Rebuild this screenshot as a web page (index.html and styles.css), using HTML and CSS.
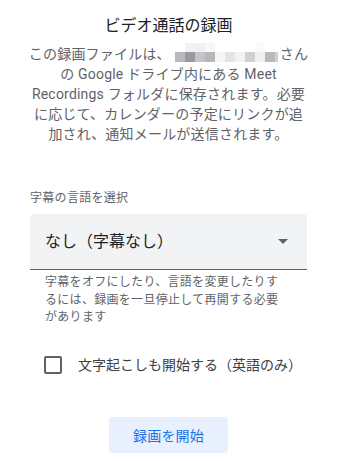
FILE: index.html
```html
<!DOCTYPE html>
<html lang="ja">
<head>
<meta charset="utf-8">
<link rel="stylesheet" href="styles.css">
</head>
<body>
<div class="dialog">
  <h1 class="title">ビデオ通話の録画</h1>
  <p class="desc">この録画ファイルは、<span class="redact" aria-label="名前"><span class="cell"></span><span class="cell g1"></span><span class="cell g2"></span><span class="cell g3"></span><span class="cell"></span><span class="cell"></span><span class="cell"></span><span class="cell"></span><span class="cell g4"></span><span class="cell"></span><span class="cell narrow"></span><span class="cell b1"></span><span class="cell b2"></span><span class="cell b3"></span><span class="cell b4"></span><span class="cell b5"></span><span class="cell b6"></span><span class="cell b7"></span><span class="cell b8"></span><span class="cell b9"></span><span class="cell b10"></span><span class="cell narrow b11"></span></span>さん<br>の Google ドライブ内にある Meet<br>Recordings フォルダに保存されます。必要<br>に応じて、カレンダーの予定にリンクが追<br>加され、通知メールが送信されます。</p>

  <div class="field-label">字幕の言語を選択</div>
  <div class="select">
    <span class="select-value">なし（字幕なし）</span>
    <svg class="arrow" width="10" height="5" viewBox="0 0 10 5"><path d="M0 0h10L5 5z" fill="#5f6368"/></svg>
  </div>
  <p class="helper">字幕をオフにしたり、言語を変更したりするには、録画を一旦停止して再開する必要があります</p>

  <label class="check-row">
    <span class="checkbox"></span>
    <span class="check-label">文字起こしも開始する（英語のみ）</span>
  </label>

  <div class="actions">
    <button class="start-btn">録画を開始</button>
  </div>
</div>
</body>
</html>
```

FILE: styles.css
```css
* { box-sizing: border-box; }
html, body { margin: 0; padding: 0; background: #fff; }
body {
  font-family: "Roboto", "Noto Sans CJK JP", sans-serif;
  width: 337px;
}
.dialog {
  display: flex;
  flex-direction: column;
  padding: 14px 30px 0 30px;
}
.title {
  margin: 0;
  font-weight: 400;
  font-size: 16px;
  line-height: 24px;
  color: #202124;
  text-align: center;
}
.desc {
  margin: 6px -10px 0 -10px;
  font-size: 14px;
  line-height: 20px;
  letter-spacing: 0.2px;
  color: #5f6368;
  text-align: center;
  white-space: nowrap;
}
.redact {
  display: inline-grid;
  grid-template-columns: repeat(10, 10px) 3px;
  grid-template-rows: 9px 10px;
  vertical-align: top;
  margin: -1.5px 2px 0 4px;
}
.cell { background: #fff; }
.g1 { background: #f2f2f2; }
.g2 { background: #f0f0f0; }
.g3 { background: #f7f7f7; }
.g4 { background: #fafafa; }
.b1 { background: #b8b9bc; }
.b2 { background: #9a9b9e; }
.b3 { background: #c4c5c8; }
.b4 { background: #b6b7ba; }
.b5 { background: #f5f5f6; }
.b6 { background: #e3e4e5; }
.b7 { background: #f2f3f3; }
.b8 { background: #cfd0d2; }
.b9 { background: #f0f0f1; }
.b10 { background: #b8b9bb; }
.b11 { background: #d0d0d2; }
.field-label {
  margin-top: 46px;
  font-size: 12px;
  line-height: 16px;
  letter-spacing: 0.3px;
  color: #5f6368;
}
.select {
  margin-top: 8px;
  height: 56px;
  background: #f1f3f4;
  border-radius: 4px 4px 0 0;
  border-bottom: 1px solid #5f6368;
  display: flex;
  align-items: center;
  justify-content: space-between;
  padding: 0 19px 0 15px;
}
.select-value {
  font-size: 16px;
  line-height: 24px;
  color: #202124;
}
.arrow { display: block; }
.helper {
  margin: 4px 0 0 0;
  padding: 0 20px 0 15px;
  font-size: 12px;
  line-height: 17.5px;
  letter-spacing: 0.3px;
  color: #5f6368;
}
.check-row {
  margin-top: 26px;
  display: flex;
  align-items: center;
  height: 24px;
  padding-left: 14px;
}
.checkbox {
  width: 18px;
  height: 18px;
  border: 2px solid #5f6368;
  border-radius: 2px;
  flex: none;
}
.check-label {
  margin-left: 16px;
  font-size: 14px;
  line-height: 20px;
  color: #3c4043;
}
.actions {
  margin-top: 40px;
  display: flex;
  justify-content: center;
}
.start-btn {
  height: 36px;
  padding: 0 24px;
  border: none;
  border-radius: 4px;
  background: #e8f0fe;
  color: #1a73e8;
  font-family: "Roboto", "Noto Sans CJK JP", sans-serif;
  font-size: 14px;
  letter-spacing: 0.2px;
  cursor: pointer;
}
```
